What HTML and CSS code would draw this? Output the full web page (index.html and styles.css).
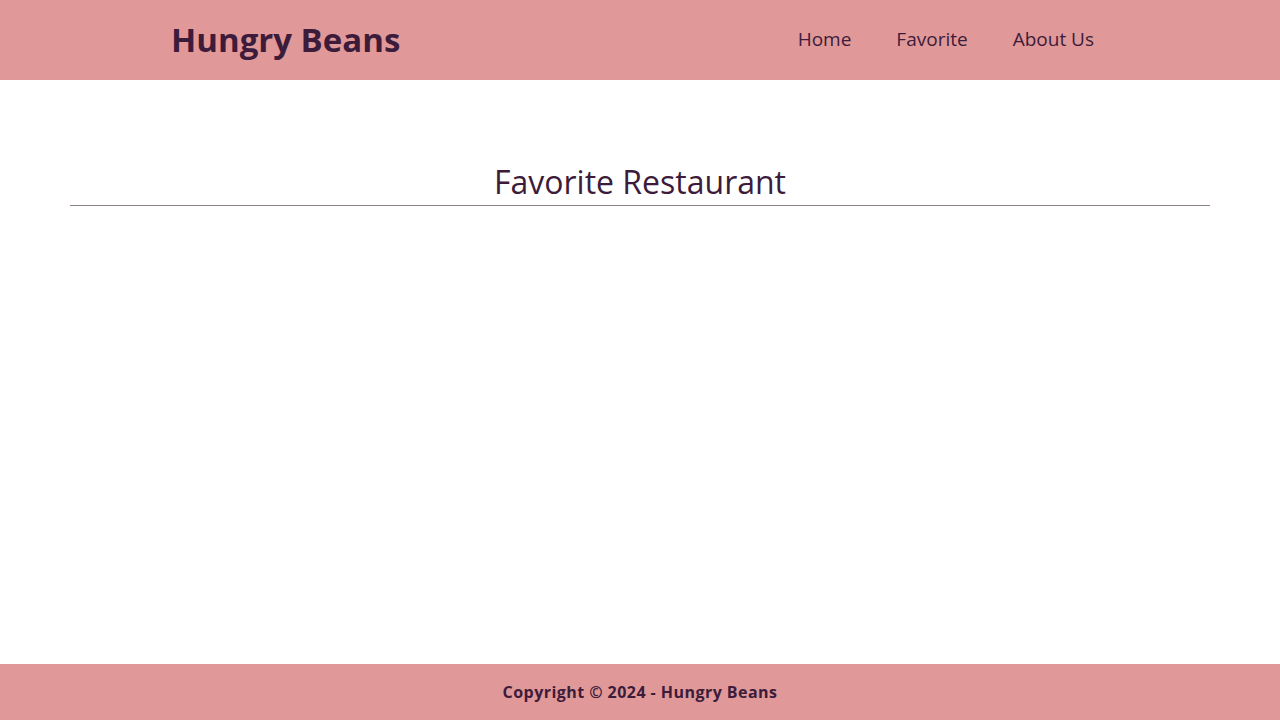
FILE: index.html
```html
<!DOCTYPE html>
<html lang="en">
<head>
<meta charset="utf-8">
<title>Hungry Beans</title>
<link rel="stylesheet" href="styles.css">
</head>
<body>
<div class="page">
  <header class="app-bar">
    <div class="brand">Hungry Beans</div>
    <nav class="nav">
      <a href="#" class="nav-link">Home</a>
      <a href="#" class="nav-link">Favorite</a>
      <a href="#" class="nav-link">About Us</a>
    </nav>
  </header>
  <main class="content">
    <h2 class="section-title">Favorite Restaurant</h2>
  </main>
  <footer class="footer">Copyright © 2024 - Hungry Beans</footer>
</div>
</body>
</html>
```

FILE: styles.css
```css
* { box-sizing: border-box; }
html, body { margin: 0; padding: 0; }
body {
  font-family: "Open Sans", "Noto Sans", sans-serif;
  color: #3d1c3b;
  background: #ffffff;
}
.page {
  min-height: 720px;
  display: flex;
  flex-direction: column;
}
.app-bar {
  height: 80px;
  background: #e19898;
  display: flex;
  align-items: center;
  justify-content: space-between;
  padding: 0 186px 0 171px;
}
.brand {
  font-size: 33px;
  font-weight: 700;
  letter-spacing: 0;
  line-height: 1;
  margin-top: -2px;
  color: #3d1c3b;
}
.nav {
  display: flex;
  gap: 45px;
}
.nav-link {
  color: #3d1c3b;
  text-decoration: none;
  font-size: 19px;
  line-height: 1;
  margin-top: -2px;
}
.content {
  flex: 1;
  padding: 80px 70px 0;
}
.section-title {
  margin: 0;
  font-weight: 400;
  font-size: 32px;
  text-align: center;
  line-height: 44px;
  padding-bottom: 1px;
  border-bottom: 1px solid #8e8089;
}
.footer {
  height: 56px;
  background: #e19898;
  display: flex;
  align-items: center;
  justify-content: center;
  font-weight: 700;
  font-size: 16px;
  letter-spacing: 0.45px;
  color: #3d1c3b;
}
```
